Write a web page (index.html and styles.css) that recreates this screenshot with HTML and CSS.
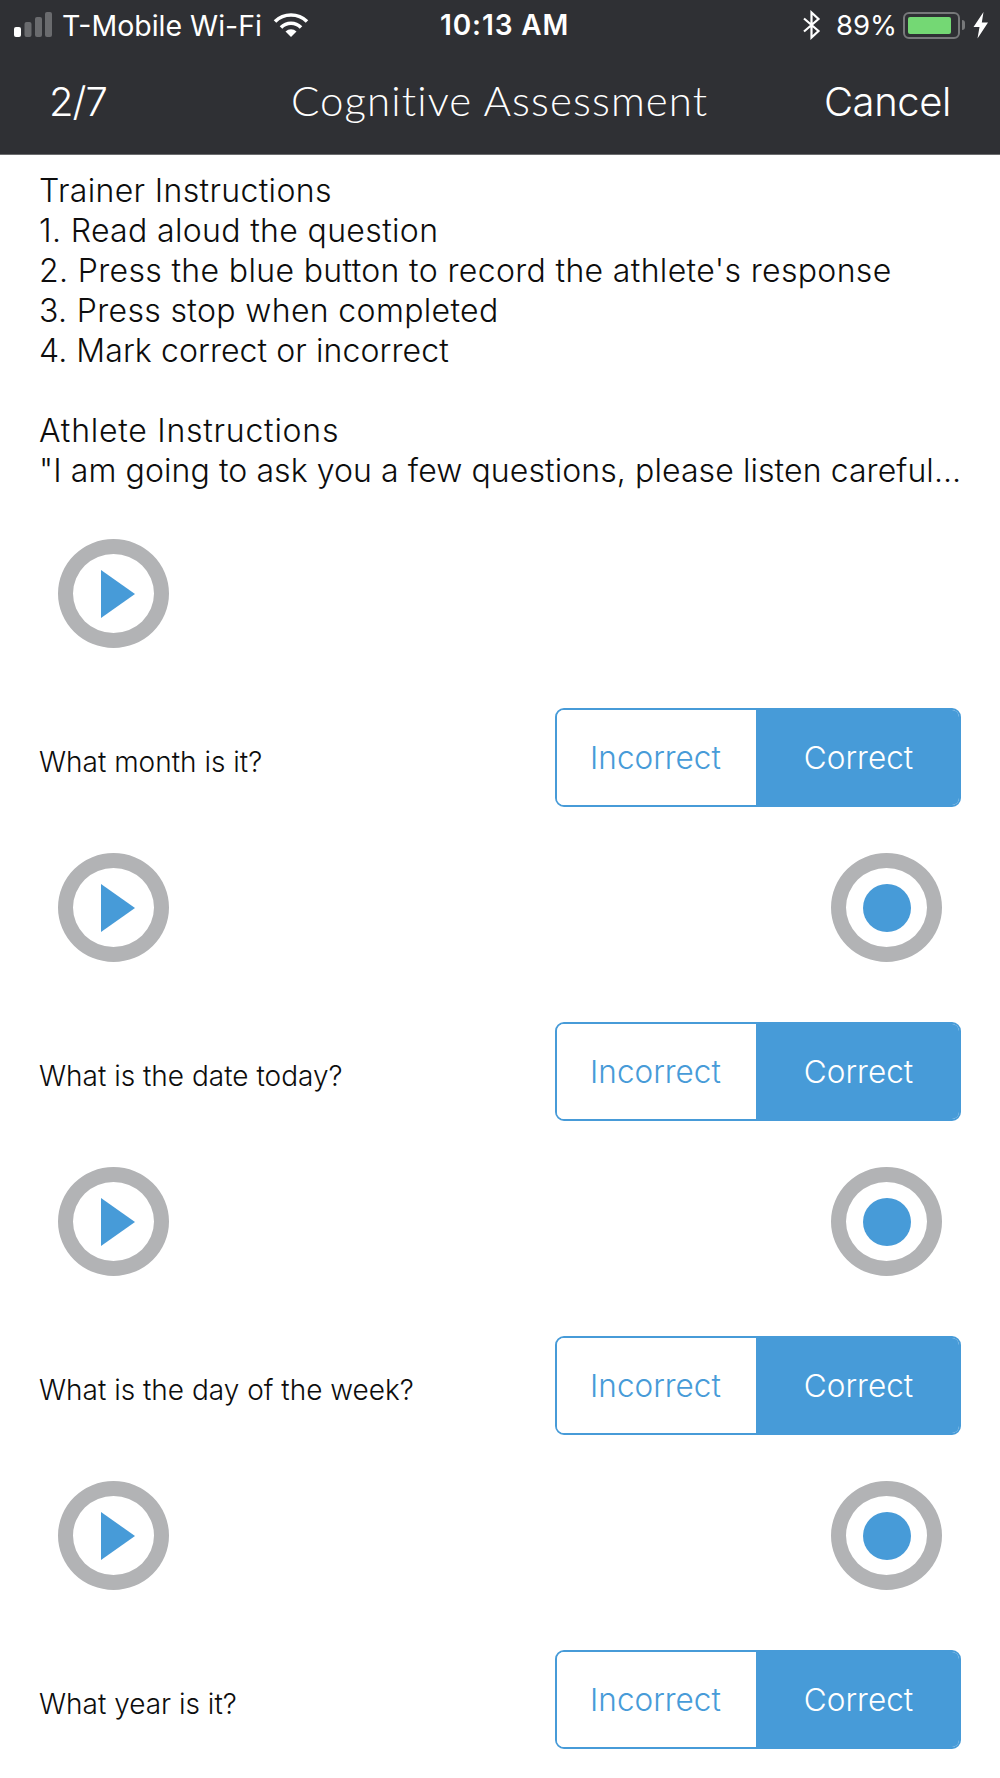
FILE: index.html
```html
<!DOCTYPE html>
<html lang="en">
<head>
<meta charset="utf-8">
<title>Cognitive Assessment</title>
<link rel="stylesheet" href="styles.css">
</head>
<body>
<header class="header">
  <div class="status">
    <div class="status-left">
      <svg class="signal" width="40" height="26" viewBox="0 0 40 26"><rect x="0" y="15" width="7" height="10" rx="2" fill="#fff"/><rect x="10.500" y="10" width="7" height="15" rx="2" fill="#6a6b6e"/><rect x="21" y="5" width="7" height="20" rx="2" fill="#6a6b6e"/><rect x="31" y="0" width="7" height="25" rx="2" fill="#6a6b6e"/></svg>
      <span class="carrier">T-Mobile Wi-Fi</span>
      <svg class="wifi" width="36" height="26" viewBox="0 0 36 26"><path d="M18 25 L12.500 19.500 A8 8 0 0 1 23.500 19.500 Z" fill="#fff"/><path d="M8 15.500 A14 14 0 0 1 28 15.500" fill="none" stroke="#fff" stroke-width="3.600"/><path d="M2 9.500 A23 23 0 0 1 34 9.500" fill="none" stroke="#fff" stroke-width="3.600"/></svg>
    </div>
    <div class="status-time">10:13 AM</div>
    <div class="status-right">
      <svg class="bt" width="20" height="30" viewBox="0 0 20 30"><path d="M2 8.500 L16.500 21 L9.500 27.500 L9.500 2.500 L16.500 9 L2 21.500" fill="none" stroke="#fff" stroke-width="2.200"/></svg>
      <span class="pct">89%</span>
      <div class="battery"><div class="battery-fill"></div></div>
      <div class="battery-tip"></div>
      <svg class="bolt" width="16" height="27" viewBox="0 0 16 27"><path d="M10.500 0 L0.500 15 L6.500 15 L4.500 26.500 L15 10.500 L8.800 10.500 Z" fill="#fff"/></svg>
    </div>
  </div>
  <div class="nav">
    <div class="nav-step">2/7</div>
    <div class="nav-title">Cognitive Assessment</div>
    <div class="nav-cancel">Cancel</div>
  </div>
</header>
<main class="main">
  <div class="instructions">
    <p>Trainer Instructions</p>
    <p>1. Read aloud the question</p>
    <p>2. Press the blue button to record the athlete's response</p>
    <p>3. Press stop when completed</p>
    <p class="tight">4. Mark correct or incorrect</p>
    <p class="blank">&nbsp;</p>
    <p class="wide">Athlete Instructions</p>
    <p class="tight">"I am going to ask you a few questions, please listen careful…</p>
  </div>

  <section class="item">
    <div class="audio">
      <div class="ring"><svg class="play" width="34" height="48" viewBox="0 0 34 48"><path d="M0 0 L34 24 L0 48 Z" fill="#479bd8"/></svg></div>
    </div>
    <div class="answer">
      <div class="question">What month is it?</div>
      <div class="segment"><div class="seg-off">Incorrect</div><div class="seg-on">Correct</div></div>
    </div>
  </section>

  <section class="item">
    <div class="audio">
      <div class="ring"><svg class="play" width="34" height="48" viewBox="0 0 34 48"><path d="M0 0 L34 24 L0 48 Z" fill="#479bd8"/></svg></div>
      <div class="ring"><div class="dot"></div></div>
    </div>
    <div class="answer">
      <div class="question">What is the date today?</div>
      <div class="segment"><div class="seg-off">Incorrect</div><div class="seg-on">Correct</div></div>
    </div>
  </section>

  <section class="item">
    <div class="audio">
      <div class="ring"><svg class="play" width="34" height="48" viewBox="0 0 34 48"><path d="M0 0 L34 24 L0 48 Z" fill="#479bd8"/></svg></div>
      <div class="ring"><div class="dot"></div></div>
    </div>
    <div class="answer">
      <div class="question">What is the day of the week?</div>
      <div class="segment"><div class="seg-off">Incorrect</div><div class="seg-on">Correct</div></div>
    </div>
  </section>

  <section class="item">
    <div class="audio">
      <div class="ring"><svg class="play" width="34" height="48" viewBox="0 0 34 48"><path d="M0 0 L34 24 L0 48 Z" fill="#479bd8"/></svg></div>
      <div class="ring"><div class="dot"></div></div>
    </div>
    <div class="answer">
      <div class="question">What year is it?</div>
      <div class="segment"><div class="seg-off">Incorrect</div><div class="seg-on">Correct</div></div>
    </div>
  </section>
</main>
</body>
</html>
```
FILE: styles.css
```css
* { box-sizing: border-box; }
html, body { margin: 0; padding: 0; }
body {
  width: 1000px;
  height: 1778px;
  overflow: hidden;
  background: #fff;
  font-family: "Inter", "Liberation Sans", sans-serif;
  color: #0d0d0d;
}
.header {
  height: 155px;
  background: #2f3034;
  border-bottom: 1px solid #6b6c6e;
  color: #fff;
}
.status {
  height: 50px;
  display: flex;
  align-items: center;
  justify-content: space-between;
  padding: 0 11px 0 14px;
  position: relative;
}
.status-left, .status-right { display: flex; align-items: center; }
.signal { margin-right: 8px; }
.carrier { font-size: 28.500px; }
.wifi { margin-left: 11px; }
.status-time {
  font-size: 28px;
  font-weight: 600;
  letter-spacing: 0.900px;
  position: absolute;
  left: 440px;
}
.pct { font-size: 27.500px; margin-left: 14px; }
.battery {
  width: 57px;
  height: 27px;
  margin-left: 6px;
  border: 2px solid #77787a;
  border-radius: 6px;
  padding: 3px;
}
.battery-fill { width: 43px; height: 100%; background: #74d874; border-radius: 2px; }
.battery-tip {
  width: 3px;
  height: 10px;
  margin-left: 2px;
  background: #77787a;
  border-radius: 0 3px 3px 0;
}
.bolt { margin-left: 8px; }
.nav {
  height: 104px;
  padding: 0 49px 1px 49px;
  display: flex;
  align-items: center;
  font-size: 40px;
  position: relative;
}
.nav-step { font-weight: 300; letter-spacing: -1px; }
.nav-title {
  font-family: "Lato", sans-serif;
  font-size: 42px;
  font-weight: 300;
  letter-spacing: 1.100px;
  position: absolute;
  left: 291px;
  margin-top: -4px;
}
.nav-cancel { margin-left: auto; font-weight: 300; letter-spacing: -0.400px; }
.main { padding: 16px 39px 0; }
.instructions { margin-bottom: 48px; }
.instructions p {
  margin: 0;
  font-size: 32px;
  line-height: 40px;
  font-weight: 300;
  letter-spacing: 0.350px;
  white-space: nowrap;
}
.instructions .tight { letter-spacing: 0.090px; }
.instructions .wide { letter-spacing: 0.750px; }
.item { margin-bottom: 46px; }
.audio {
  display: flex;
  justify-content: space-between;
  padding: 0 19px;
  margin-bottom: 60px;
}
.ring {
  width: 111px;
  height: 109px;
  border: 15px solid #b2b3b5;
  border-radius: 50%;
  display: flex;
  align-items: center;
  justify-content: center;
}
.play { margin-left: 8px; }
.dot { width: 48px; height: 48px; border-radius: 50%; background: #479bd8; }
.answer {
  display: flex;
  align-items: center;
  justify-content: space-between;
}
.question {
  font-size: 28px;
  font-weight: 300;
  padding-top: 8px;
}
.segment {
  display: flex;
  width: 406px;
  height: 99px;
  font-size: 31.500px;
  font-weight: 300;
  border: 2px solid #479bd8;
  border-radius: 9px;
  overflow: hidden;
}
.seg-off, .seg-on {
  display: flex;
  align-items: center;
  justify-content: center;
}
.seg-off { width: 199px; padding-right: 2px; color: #479bd8; background: #fff; }
.seg-on { flex: 1; padding-left: 2px; color: #fff; background: #479bd8; }
```
